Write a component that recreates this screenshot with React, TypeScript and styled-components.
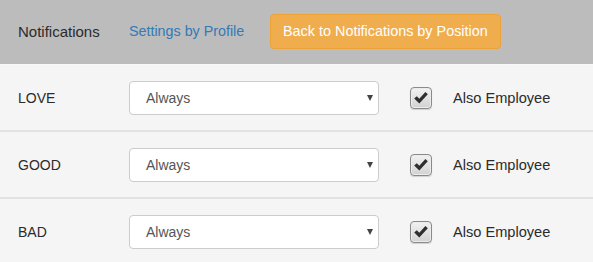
import React from "react";
import styled, { createGlobalStyle } from "styled-components";

const GlobalStyle = createGlobalStyle`
  html, body {
    margin: 0;
    padding: 0;
    background: #f5f5f5;
    font-family: "Liberation Sans", Arial, sans-serif;
    font-size: 14px;
    color: #333;
  }
`;

const Page = styled.div`
  width: 593px;
`;

const Header = styled.div`
  height: 64px;
  background-color: #bcbcbc;
  display: flex;
  align-items: center;
  padding-left: 18px;
  border-bottom: 1px solid #f9f9f9;
`;

const HeaderTitle = styled.div`
  width: 111px;
  color: #2b2b2b;
  font-size: 15px;
  margin-top: -1px;
`;

const HeaderLink = styled.a`
  color: #337ab7;
  font-size: 14.3px;
  text-decoration: none;
  width: 141px;
  margin-top: -3px;
`;

const BackButton = styled.button`
  height: 35px;
  padding: 0 12px;
  border: 1px solid #eea236;
  border-radius: 4px;
  background-color: #f0ad4e;
  color: #fff;
  font-family: "Liberation Sans", Arial, sans-serif;
  font-size: 14.4px;
  cursor: pointer;
  margin-top: -2px;
`;

const Row = styled.div<{ $last?: boolean }>`
  height: 65px;
  display: flex;
  align-items: center;
  padding-left: 18px;
  background-color: #f5f5f5;
  border-bottom: ${(p) => (p.$last ? "none" : "2px solid #e2e2e2")};
`;

const Label = styled.div`
  width: 111px;
  font-size: 14px;
  color: #2b2b2b;
`;

const Select = styled.div`
  position: relative;
  width: 250px;
  height: 34px;
  box-sizing: border-box;
  border: 1px solid #ccc;
  border-radius: 4px;
  background: #fff;
  display: flex;
  align-items: center;
  padding-left: 16px;
  font-size: 14px;
  color: #555;
`;

const Caret = styled.span`
  position: absolute;
  right: 5px;
  top: 13px;
  width: 0;
  height: 0;
  border-left: 3px solid transparent;
  border-right: 3px solid transparent;
  border-top: 6px solid #444;
`;

const CheckBox = styled.span`
  margin-left: 31px;
  width: 22px;
  height: 22px;
  box-sizing: border-box;
  border: 1px solid #8a8a8a;
  border-radius: 4px;
  background: linear-gradient(#f2f2f2, #d2d2d2);
  box-shadow: inset 0 0 0 1px #ececec, 0 1px 1px rgba(0, 0, 0, 0.15);
  display: flex;
  align-items: center;
  justify-content: center;
`;

const CheckText = styled.span`
  margin-left: 21px;
  font-size: 14.6px;
  color: #2b2b2b;
`;

const Check = () => (
  <svg width="16" height="14" viewBox="0 0 16 14">
    <path d="M1.2 7.6 L3.8 5.2 L6.3 7.7 L12.4 1 L14.8 3.3 L6.3 12.6 Z" fill="#2e2e2e" />
  </svg>
);

const rows = ["LOVE", "GOOD", "BAD"];

export default function App() {
  return (
    <Page>
      <GlobalStyle />
      <Header>
        <HeaderTitle>Notifications</HeaderTitle>
        <HeaderLink href="#">Settings by Profile</HeaderLink>
        <BackButton>Back to Notifications by Position</BackButton>
      </Header>
      {rows.map((r, i) => (
        <Row key={r} $last={i === rows.length - 1}>
          <Label>{r}</Label>
          <Select>
            Always
            <Caret />
          </Select>
          <CheckBox>
            <Check />
          </CheckBox>
          <CheckText>Also Employee</CheckText>
        </Row>
      ))}
    </Page>
  );
}
